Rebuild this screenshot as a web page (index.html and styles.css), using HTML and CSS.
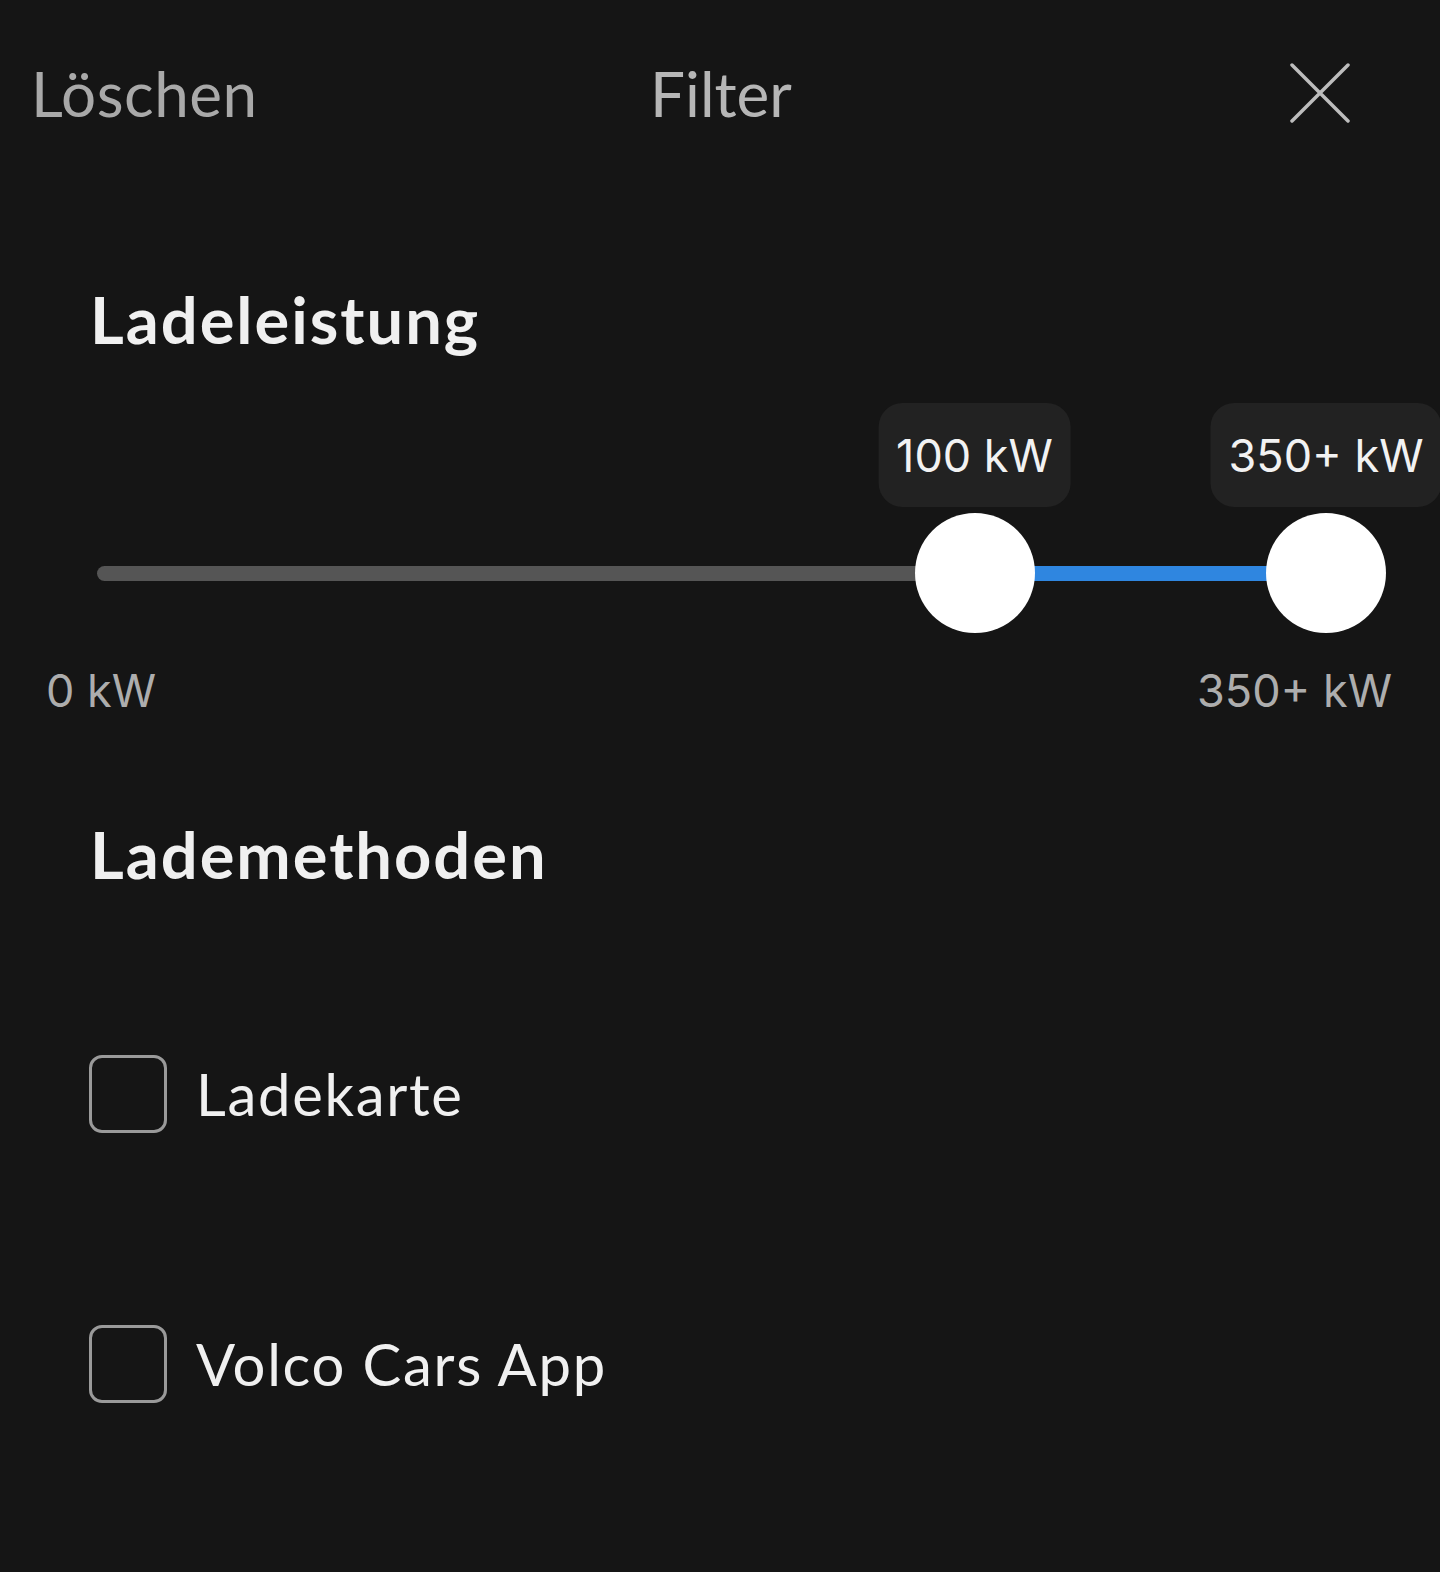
FILE: index.html
```html
<!DOCTYPE html>
<html lang="de">
<head>
<meta charset="utf-8">
<title>Filter</title>
<link rel="stylesheet" href="styles.css">
</head>
<body>
<div class="screen">
  <header class="topbar">
    <span class="clear">Löschen</span>
    <span class="title">Filter</span>
    <button class="close" aria-label="Schließen">
      <svg width="60" height="60" viewBox="0 0 60 60"><path d="M2 2 L58 58 M58 2 L2 58" stroke="#bdbdbd" stroke-width="3.5" stroke-linecap="round" fill="none"/></svg>
    </button>
  </header>

  <section class="power">
    <h2 class="heading">Ladeleistung</h2>
    <div class="slider">
      <div class="track">
        <div class="fill" style="left:71.4%"></div>
        <div class="handle" style="left:71.4%">
          <span class="bubble">100 kW</span>
          <span class="knob"></span>
        </div>
        <div class="handle" style="left:100%">
          <span class="bubble">350+ kW</span>
          <span class="knob"></span>
        </div>
      </div>
    </div>
    <div class="scale">
      <span>0 kW</span>
      <span>350+ kW</span>
    </div>
  </section>

  <section class="methods">
    <h2 class="heading">Lademethoden</h2>
    <label class="option"><span class="box"></span><span class="label">Ladekarte</span></label>
    <label class="option"><span class="box"></span><span class="label">Volco Cars App</span></label>
  </section>
</div>
</body>
</html>
```

FILE: styles.css
```css
* { box-sizing: border-box; }
html, body {
  margin: 0;
  padding: 0;
  background: #151515;
}
body {
  width: 1440px;
  height: 1572px;
  overflow: hidden;
  font-family: Lato, "Open Sans", sans-serif;
  color: #efefef;
}
.screen {
  display: flex;
  flex-direction: column;
}
.topbar {
  margin-top: 53px;
  height: 80px;
  display: grid;
  grid-template-columns: 1fr auto 1fr;
  align-items: center;
  font-size: 62px;
  line-height: 80px;
  color: #a9a9a9;
}
.clear {
  justify-self: start;
  padding-left: 31px;
  letter-spacing: 0.5px;
}
.title {
  color: #b6b6b6;
  padding-left: 2px;
}
.close {
  justify-self: end;
  margin-right: 90px;
  background: none;
  border: 0;
  padding: 0;
  width: 60px;
  height: 60px;
  display: flex;
}
.heading {
  margin: 0;
  padding-left: 90px;
  font-size: 65px;
  line-height: 80px;
  font-weight: 700;
  letter-spacing: 2px;
  color: #f0f0f0;
}
.power .heading {
  margin-top: 146px;
}
.slider {
  margin-top: 44px;
  margin-left: 97px;
  width: 1229px;
  padding-top: 163px;
  padding-bottom: 53px;
}
.track {
  position: relative;
  height: 15px;
  border-radius: 8px;
  background: #555555;
}
.fill {
  position: absolute;
  top: 0;
  bottom: 0;
  right: 0;
  background: #2f86e0;
}
.handle {
  position: absolute;
  top: 7px;
  width: 0;
  height: 0;
}
.knob {
  position: absolute;
  left: -60px;
  top: -60px;
  width: 120px;
  height: 120px;
  border-radius: 50%;
  background: #ffffff;
}
.bubble {
  position: absolute;
  top: -170px;
  left: 0;
  transform: translateX(-50%);
  height: 104px;
  padding: 0 18px;
  display: flex;
  align-items: center;
  border-radius: 24px;
  background: #222222;
  font-family: Inter, "Liberation Sans", sans-serif;
  font-size: 45px;
  color: #f2f2f2;
  white-space: nowrap;
}
.scale {
  margin-top: 27px;
  display: flex;
  justify-content: space-between;
  padding: 0 48px 0 46px;
  font-family: Inter, "Liberation Sans", sans-serif;
  font-size: 45px;
  line-height: 60px;
  color: #adadad;
}
.methods .heading {
  margin-top: 93px;
}
.option {
  display: flex;
  align-items: center;
  gap: 29px;
  padding-left: 89px;
  height: 78px;
  font-size: 58px;
  line-height: 78px;
  letter-spacing: 1.7px;
  color: #f0f0f0;
}
.option + .option {
  margin-top: 192px;
}
.heading + .option {
  margin-top: 161px;
}
.box {
  width: 78px;
  height: 78px;
  border: 3px solid #9a9a9a;
  border-radius: 13px;
  flex: none;
}
```
